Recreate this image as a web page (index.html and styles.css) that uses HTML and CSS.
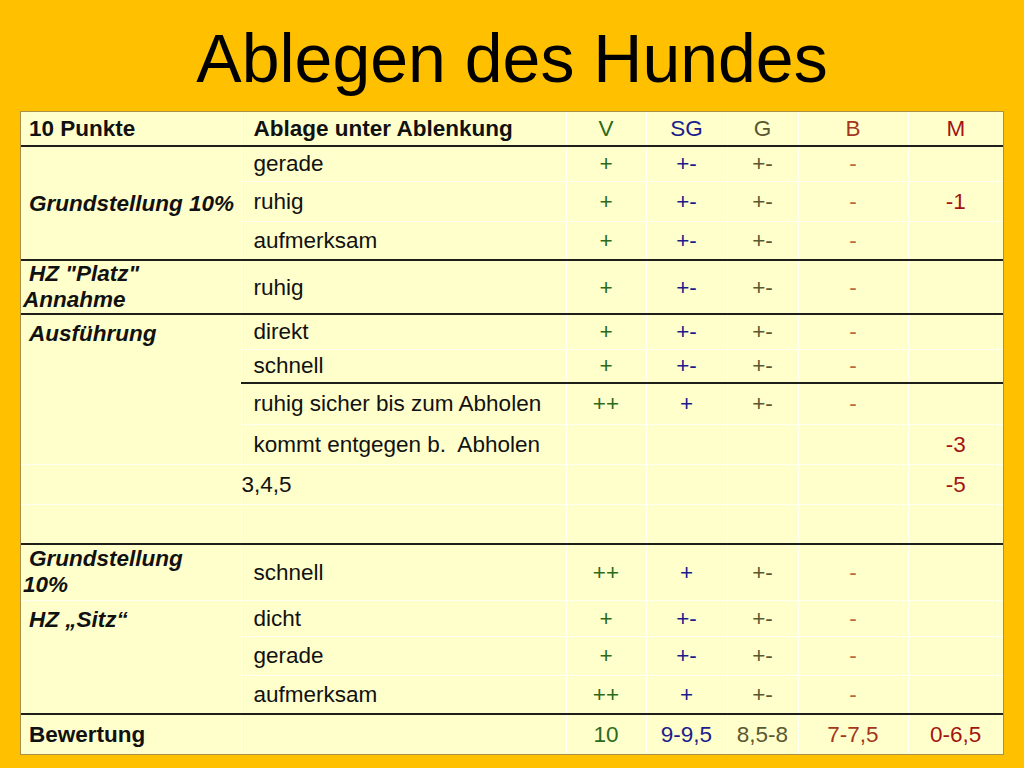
FILE: index.html
```html
<!DOCTYPE html>
<html lang="de">
<head>
<meta charset="utf-8">
<title>Ablegen des Hundes</title>
<link rel="stylesheet" href="styles.css">
</head>
<body>
<h1 class="title">Ablegen des Hundes</h1>
<div class="frame">
<table class="grid">
<colgroup>
<col class="c1"><col class="c2"><col class="c3"><col class="c4"><col class="c5"><col class="c6"><col class="c7">
</colgroup>
<tr class="r-head thick">
<td class="lbl plain">10 Punkte</td>
<td class="crit bold">Ablage unter Ablenkung</td>
<td class="v">V</td><td class="sg">SG</td><td class="g">G</td><td class="b">B</td><td class="m">M</td>
</tr>
<tr class="r35">
<td class="lbl mid thick-b" rowspan="3">Grundstellung 10%</td>
<td class="crit">gerade</td>
<td class="v">+</td><td class="sg">+-</td><td class="g">+-</td><td class="b">-</td><td class="m"></td>
</tr>
<tr class="r40">
<td class="crit">ruhig</td>
<td class="v">+</td><td class="sg">+-</td><td class="g">+-</td><td class="b">-</td><td class="m">-1</td>
</tr>
<tr class="r39 thick">
<td class="crit">aufmerksam</td>
<td class="v">+</td><td class="sg">+-</td><td class="g">+-</td><td class="b">-</td><td class="m"></td>
</tr>
<tr class="r54 thick">
<td class="lbl mid tight">HZ "Platz" Annahme</td>
<td class="crit">ruhig</td>
<td class="v">+</td><td class="sg">+-</td><td class="g">+-</td><td class="b">-</td><td class="m"></td>
</tr>
<tr class="r35">
<td class="lbl top" rowspan="4">Ausführung</td>
<td class="crit">direkt</td>
<td class="v">+</td><td class="sg">+-</td><td class="g">+-</td><td class="b">-</td><td class="m"></td>
</tr>
<tr class="r34 thick">
<td class="crit">schnell</td>
<td class="v">+</td><td class="sg">+-</td><td class="g">+-</td><td class="b">-</td><td class="m"></td>
</tr>
<tr class="r41">
<td class="crit">ruhig sicher bis zum Abholen</td>
<td class="v">++</td><td class="sg">+</td><td class="g">+-</td><td class="b">-</td><td class="m"></td>
</tr>
<tr class="r40">
<td class="crit">kommt entgegen b.&nbsp; Abholen</td>
<td class="v"></td><td class="sg"></td><td class="g"></td><td class="b"></td><td class="m">-3</td>
</tr>
<tr class="r40">
<td class="lbl"></td>
<td class="crit flush">3,4,5</td>
<td class="v"></td><td class="sg"></td><td class="g"></td><td class="b"></td><td class="m">-5</td>
</tr>
<tr class="r40 thick">
<td class="lbl"></td>
<td class="crit"></td>
<td class="v"></td><td class="sg"></td><td class="g"></td><td class="b"></td><td class="m"></td>
</tr>
<tr class="r56">
<td class="lbl mid tight">Grundstellung 10%</td>
<td class="crit">schnell</td>
<td class="v">++</td><td class="sg">+</td><td class="g">+-</td><td class="b">-</td><td class="m"></td>
</tr>
<tr class="r36">
<td class="lbl top thick-b" rowspan="3">HZ „Sitz“</td>
<td class="crit">dicht</td>
<td class="v">+</td><td class="sg">+-</td><td class="g">+-</td><td class="b">-</td><td class="m"></td>
</tr>
<tr class="r39">
<td class="crit">gerade</td>
<td class="v">+</td><td class="sg">+-</td><td class="g">+-</td><td class="b">-</td><td class="m"></td>
</tr>
<tr class="r39 thick">
<td class="crit">aufmerksam</td>
<td class="v">++</td><td class="sg">+</td><td class="g">+-</td><td class="b">-</td><td class="m"></td>
</tr>
<tr class="r40 foot">
<td class="lbl plain">Bewertung</td>
<td class="crit"></td>
<td class="v">10</td><td class="sg">9-9,5</td><td class="g">8,5-8</td><td class="b strong">7-7,5</td><td class="m">0-6,5</td>
</tr>
</table>
</div>
</body>
</html>
```

FILE: styles.css
```css
html, body {
  margin: 0;
  padding: 0;
  background: #ffc000;
}

body {
  width: 1024px;
  height: 768px;
  overflow: hidden;
  font-family: "Liberation Sans", Arial, sans-serif;
  color: #111;
}

.title {
  margin: 0;
  height: 111px;
  box-sizing: border-box;
  padding-top: 20px;
  font-size: 68px;
  line-height: 76px;
  font-weight: normal;
  text-align: center;
  color: #000;
}

.frame {
  margin-left: 20px;
  width: 982px;
  border: 1px solid #a89048;
  background: #ffffcc;
}

.grid {
  width: 982px;
  table-layout: fixed;
  border-collapse: collapse;
  border-style: hidden;
  font-size: 22.5px;
}

.c1 { width: 220px; }
.c2 { width: 325px; }
.c3 { width: 80px; }
.c4 { width: 81px; }
.c5 { width: 71px; }
.c6 { width: 110px; }
.c7 { width: 95px; }

.grid td {
  border: 1px solid #fffff2;
  padding: 0;
  vertical-align: middle;
  text-align: center;
  line-height: 25px;
  white-space: nowrap;
}

.grid tr.thick td,
.grid td.thick-b {
  border-bottom: 2px solid #1e1e1a;
}

.r-head { height: 34px; }
.r34 { height: 34px; }
.r35 { height: 35px; }
.r36 { height: 36px; }
.r39 { height: 39px; }
.r40 { height: 40px; }
.r41 { height: 41px; }
.r54 { height: 54px; }
.r56 { height: 56px; }

.grid td.lbl {
  text-align: left;
  font-weight: bold;
  font-style: italic;
  padding-left: 2px;
  text-indent: 6px;
  white-space: normal;
}

.grid td.lbl.plain {
  font-style: normal;
}

.grid td.lbl.top {
  vertical-align: top;
  padding-top: 6px;
}

.grid td.lbl.tight {
  line-height: 26px;
  padding-right: 60px;
}

.grid td.crit {
  text-align: left;
  padding-left: 12px;
  color: #111;
}

.grid td.crit.bold {
  font-weight: bold;
}

.grid td.crit.flush {
  padding-left: 0;
}

.grid td.v { color: #2c6a1c; }
.grid td.sg { color: #1c1c8c; }
.grid td.g { color: #5a5830; }
.grid td.b { color: #b86a3a; }
.grid td.m { color: #a41414; }

.r-head td.b,
.grid td.b.strong { color: #a4361e; }
```
